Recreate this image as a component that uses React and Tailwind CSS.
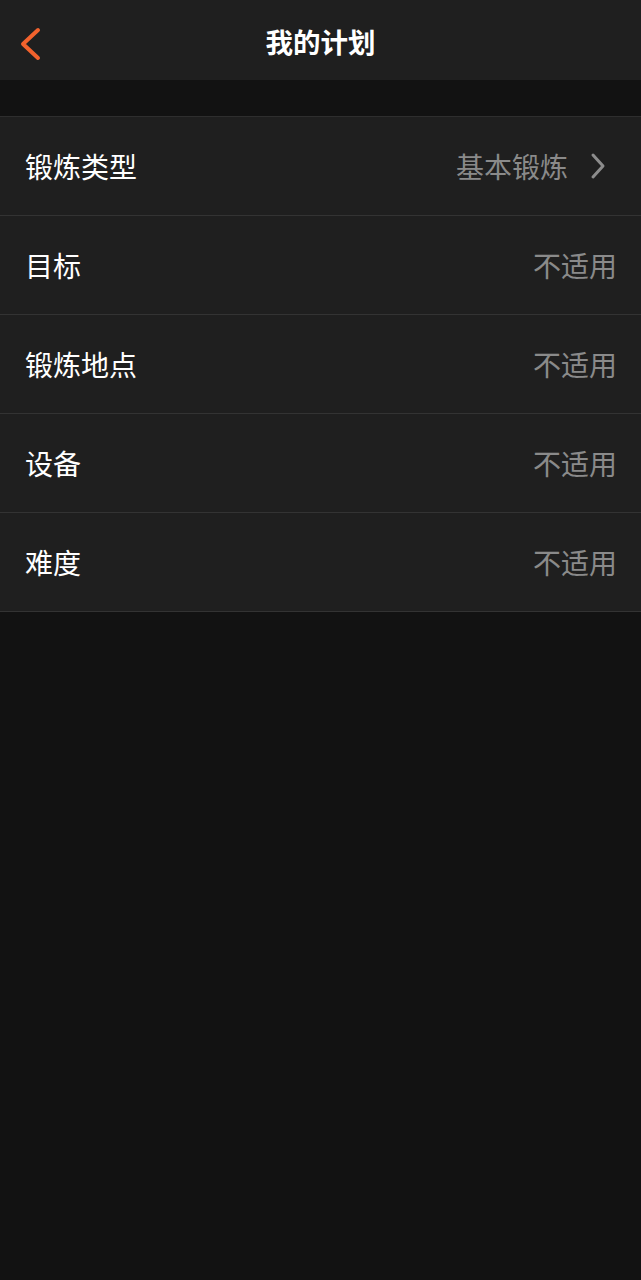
import React from "react";

const rows = [
  { label: "锻炼类型", value: "基本锻炼", chevron: true },
  { label: "目标", value: "不适用" },
  { label: "锻炼地点", value: "不适用" },
  { label: "设备", value: "不适用" },
  { label: "难度", value: "不适用" },
];

export default function App() {
  return (
    <div
      className="min-h-[1280px] w-full bg-[#121212]"
      style={{ fontFamily: '"Noto Sans CJK SC", "Noto Sans", sans-serif' }}
    >
      <div className="relative flex h-[80px] items-center justify-center bg-[#1f1f1f] pt-[4px]">
        <button className="absolute left-[14px] top-[22px] flex h-[44px] w-[34px] items-center justify-center">
          <svg width="34" height="44" viewBox="0 0 34 44">
            <path
              d="M24 8 L9 22 L24 36"
              fill="none"
              stroke="#f2622d"
              strokeWidth="4"
              strokeLinecap="round"
              strokeLinejoin="round"
            />
          </svg>
        </button>
        <h1 className="text-[27.5px] font-bold leading-none text-white">我的计划</h1>
      </div>
      <div className="h-[36px]" />
      <div className="border-t border-[#2e2e2e]">
        {rows.map((r) => (
          <div
            key={r.label}
            className="flex h-[99px] items-center justify-between border-b border-[#333333] bg-[#1f1f1f] pl-[25px] pr-[24px]"
          >
            <span className="text-[28px] leading-none text-white">{r.label}</span>
            <div className="flex items-center">
              <span className="text-[28px] leading-none text-[#8a8a8a]">{r.value}</span>
              {r.chevron && (
                <svg width="22" height="30" viewBox="0 0 22 30" className="ml-[18px] mr-[9px]">
                  <path
                    d="M7 4 L17 15 L7 26"
                    fill="none"
                    stroke="#8c8c8c"
                    strokeWidth="3"
                    strokeLinecap="round"
                    strokeLinejoin="round"
                  />
                </svg>
              )}
            </div>
          </div>
        ))}
      </div>
    </div>
  );
}
